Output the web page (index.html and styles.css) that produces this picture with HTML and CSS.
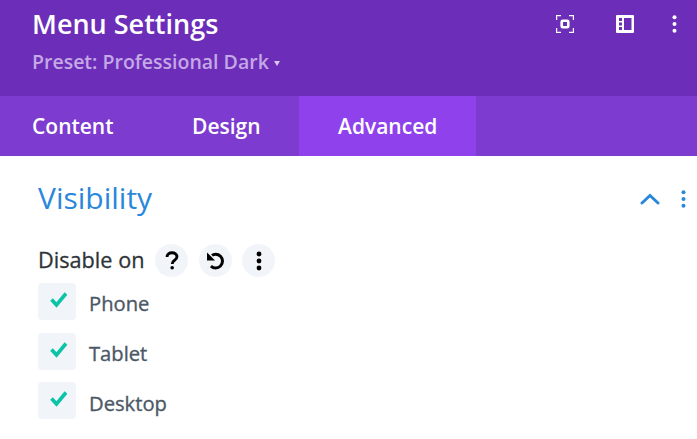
FILE: index.html
```html
<!DOCTYPE html>
<html lang="en">
<head>
    <meta charset="UTF-8">
    <title>Menu Settings</title>
    <link rel="stylesheet" href="styles.css">
</head>
<body>
    <div class="header">
        <div class="header-text">
            <h1 class="title">Menu Settings</h1>
            <div class="preset">Preset: Professional Dark <span class="caret"></span></div>
        </div>
        <div class="header-icons">
            <svg class="head-icon" width="18" height="18" viewBox="0 0 18 18" fill="none" stroke="#fff">
                <path d="M.6 5V.6H5M13 .6h4.4V5M.6 13v4.4H5M13 17.4h4.4V13" stroke-width="1.2"/>
                <rect x="5.7" y="5.7" width="6.6" height="6.6" rx="1" stroke-width="2.6"/>
            </svg>
            <svg class="head-icon" width="18" height="18" viewBox="0 0 18 18">
                <path fill="#fff" fill-rule="evenodd" d="M1 0h16a1 1 0 0 1 1 1v16a1 1 0 0 1-1 1H1a1 1 0 0 1-1-1V1a1 1 0 0 1 1-1zM3 3v3h3V3zM3 7.5v3h3v-3zM3 12v3h3v-3zM8 3v12h7.5V3z"/>
            </svg>
            <svg class="head-icon head-dots" width="5" height="18" viewBox="0 0 5 18" fill="#fff">
                <circle cx="2.5" cy="2.3" r="2"/><circle cx="2.5" cy="9" r="2"/><circle cx="2.5" cy="15.7" r="2"/>
            </svg>
        </div>
    </div>

    <div class="tabs">
        <div class="tab tab-content">Content</div>
        <div class="tab tab-design">Design</div>
        <div class="tab tab-advanced">Advanced</div>
    </div>

    <div class="panel">
        <div class="panel-head">
            <h2 class="panel-title">Visibility</h2>
            <div class="panel-icons">
                <svg width="20" height="12" viewBox="0 0 20 12" fill="none" stroke="#2b87da" stroke-width="3" stroke-linecap="round">
                    <path d="M2 10l8-7.5 8 7.5"/>
                </svg>
                <svg width="5" height="18" viewBox="0 0 5 18" fill="#2b87da">
                    <circle cx="2.5" cy="2.3" r="2"/><circle cx="2.5" cy="9" r="2"/><circle cx="2.5" cy="15.7" r="2"/>
                </svg>
            </div>
        </div>

        <div class="field-label">
            <span class="field-text">Disable on</span>
            <span class="round-btn">
                <svg width="14" height="19" viewBox="0 0 14 20" fill="none" stroke="#000" stroke-width="3">
                    <path d="M1.8 6.2C1.8 3.4 4 1.8 7 1.8s5.2 1.7 5.2 4.2c0 2-1.2 3-2.7 4-1.5 1-2.3 1.8-2.3 3.6"/>
                    <circle cx="7.2" cy="17.6" r="1.9" fill="#000" stroke="none"/>
                </svg>
            </span>
            <span class="round-btn">
                <svg width="17" height="18" viewBox="0 0 17 18" fill="none" stroke="#000" stroke-width="3">
                    <path d="M5 3.4C6 2.6 7.2 2.2 8.6 2.2a6.9 6.9 0 0 1 0 13.8c-1.8 0-3.4-.7-4.7-1.9"/>
                    <path d="M0 .4v8h8z" fill="#000" stroke="none"/>
                </svg>
            </span>
            <span class="round-btn">
                <svg width="6" height="20" viewBox="0 0 6 20" fill="#000">
                    <circle cx="3" cy="3" r="2.4"/><circle cx="3" cy="10" r="2.4"/><circle cx="3" cy="17" r="2.4"/>
                </svg>
            </span>
        </div>

        <div class="options">
            <div class="option">
                <span class="checkbox"><svg width="18" height="16" viewBox="0 0 18 16" fill="none" stroke="#0bc4a7" stroke-width="3.6"><path d="M1.5 7.5l5 5.5L16 1.5"/></svg></span>
                <span class="option-text">Phone</span>
            </div>
            <div class="option">
                <span class="checkbox"><svg width="18" height="16" viewBox="0 0 18 16" fill="none" stroke="#0bc4a7" stroke-width="3.6"><path d="M1.5 7.5l5 5.5L16 1.5"/></svg></span>
                <span class="option-text">Tablet</span>
            </div>
            <div class="option">
                <span class="checkbox"><svg width="18" height="16" viewBox="0 0 18 16" fill="none" stroke="#0bc4a7" stroke-width="3.6"><path d="M1.5 7.5l5 5.5L16 1.5"/></svg></span>
                <span class="option-text">Desktop</span>
            </div>
        </div>
    </div>
</body>
</html>
```

FILE: styles.css
```css
html, body {
    margin: 0;
    height: 439px;
    overflow: hidden;
}
body {
    font-family: "Open Sans", sans-serif;
    background-color: #fff;
}
.header {
    height: 96px;
    box-sizing: border-box;
    padding: 5px 20px 0 32px;
    background-color: #6c2eb9;
    display: flex;
    justify-content: space-between;
}
.title {
    margin: 0;
    font-size: 27px;
    line-height: 38px;
    font-weight: 600;
    color: #fff;
}
.preset {
    margin-top: 6px;
    font-size: 19.5px;
    line-height: 26px;
    font-weight: 600;
    color: #c5a8e6;
}
.caret {
    display: inline-block;
    vertical-align: 3px;
    border-left: 3.5px solid transparent;
    border-right: 3.5px solid transparent;
    border-top: 5px solid #d9c8ee;
}
.header-icons {
    display: flex;
    align-items: flex-start;
    gap: 42px;
    padding-top: 10px;
}
.head-dots {
    margin-left: -4px;
}
.tabs {
    height: 60px;
    display: flex;
    background-color: #7d3bcf;
}
.tab {
    box-sizing: border-box;
    font-size: 21px;
    line-height: 60px;
    font-weight: 600;
    color: #fff;
}
.tab-content {
    width: 153px;
    padding-left: 32px;
}
.tab-design {
    width: 146px;
    padding-left: 39px;
}
.tab-advanced {
    width: 177px;
    padding-left: 39px;
    background-color: #8f42ec;
}
.panel {
    padding: 0 0 0 38px;
}
.panel-head {
    display: flex;
    justify-content: space-between;
    align-items: center;
    height: 86px;
    padding-right: 11px;
}
.panel-title {
    margin: 0 0 2px;
    font-size: 30px;
    line-height: 80px;
    font-weight: 400;
    color: #2b87da;
}
.panel-icons {
    display: flex;
    align-items: center;
    gap: 21px;
}
.field-label {
    display: flex;
    align-items: center;
    height: 33px;
    font-size: 21.7px;
    font-weight: 400;
    color: #2e3438;
    margin-top: 2px;
}
.field-text {
    padding-bottom: 2px;
    -webkit-text-stroke: 0.3px #2e3438;
}
.round-btn {
    width: 33px;
    height: 33px;
    border-radius: 50%;
    background-color: #f1f5f9;
    display: flex;
    align-items: center;
    justify-content: center;
    margin-left: 10.5px;
}
.options {
    margin-top: 6px;
}
.option {
    display: flex;
    align-items: center;
    height: 37px;
    margin-bottom: 12.5px;
    font-size: 20.2px;
    font-weight: 400;
    color: #4c5866;
}
.option-text {
    padding-top: 3px;
    -webkit-text-stroke: 0.35px #4c5866;
}
.option:nth-child(2) .option-text {
    padding-top: 4px;
}
.option:last-child .option-text {
    padding-top: 4px;
}
.checkbox {
    width: 38px;
    height: 37px;
    margin-right: 13px;
    border-radius: 4px;
    background-color: #f1f5f9;
    display: flex;
    justify-content: center;
    padding: 9px 0 0 3px;
    box-sizing: border-box;
}
```
